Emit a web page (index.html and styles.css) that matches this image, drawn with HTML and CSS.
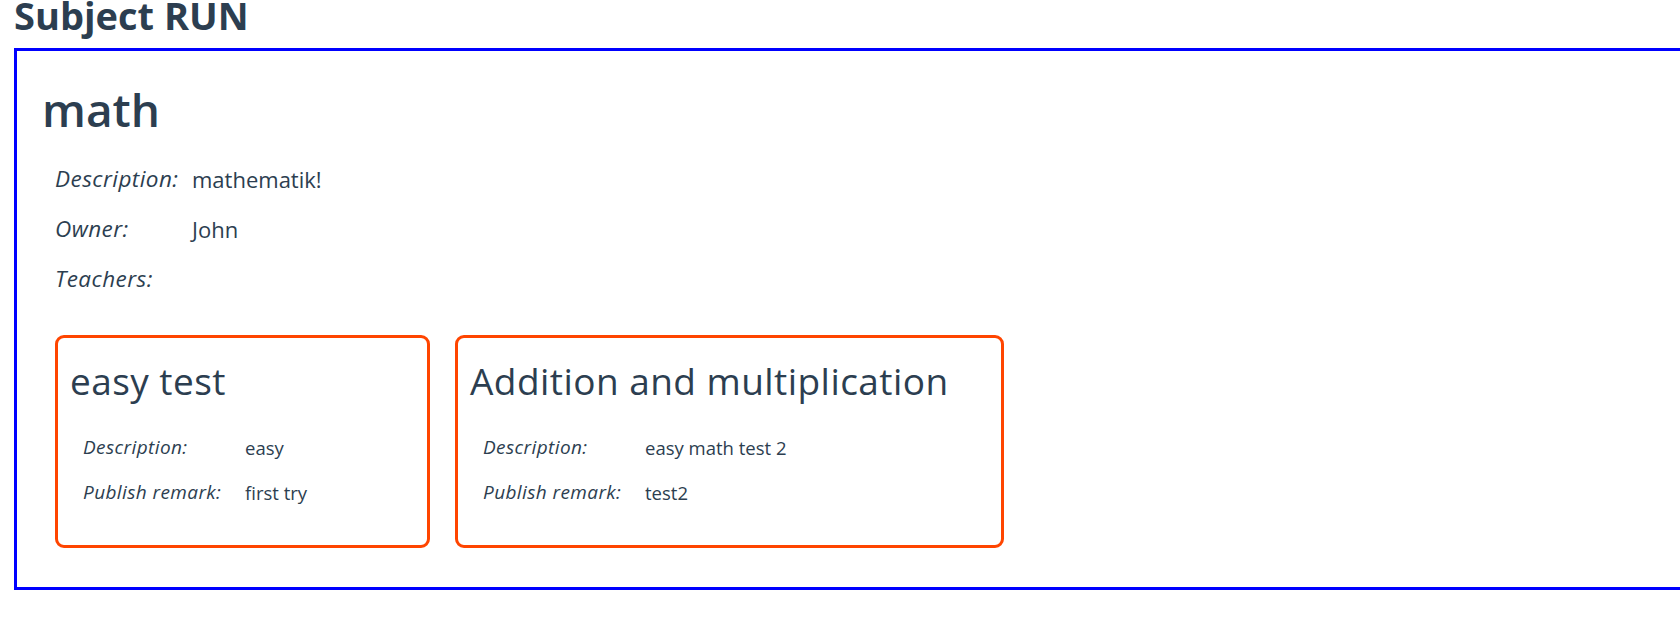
FILE: index.html
```html
<!DOCTYPE html>
<html lang="en">
<head>
<meta charset="utf-8">
<title>Subject RUN</title>
<link rel="stylesheet" href="styles.css">
</head>
<body>
<div class="page">
  <h1 class="page-title">Subject RUN</h1>
  <section class="subject">
    <h2 class="subject-name">math</h2>
    <table class="info">
      <tr><td class="label">Description:</td><td class="value">mathematik!</td></tr>
      <tr><td class="label">Owner:</td><td class="value">John</td></tr>
      <tr><td class="label">Teachers:</td><td class="value"></td></tr>
    </table>
    <div class="tests">
      <div class="card">
        <h3 class="card-title">easy test</h3>
        <table class="card-info">
          <tr><td class="label">Description:</td><td class="value">easy</td></tr>
          <tr><td class="label">Publish remark:</td><td class="value">first try</td></tr>
        </table>
      </div>
      <div class="card">
        <h3 class="card-title">Addition and multiplication</h3>
        <table class="card-info">
          <tr><td class="label">Description:</td><td class="value">easy math test 2</td></tr>
          <tr><td class="label">Publish remark:</td><td class="value">test2</td></tr>
        </table>
      </div>
    </div>
  </section>
</div>
</body>
</html>
```

FILE: styles.css
```css
html, body {
  margin: 0;
  padding: 0;
  background: #ffffff;
}

body {
  font-family: "Open Sans", "Noto Sans", sans-serif;
  color: #2c3e50;
  overflow: hidden;
}

.page {
  padding-left: 14px;
}

.page-title {
  margin: 0 0 17px 0;
  font-size: 38px;
  font-weight: 700;
  line-height: 31px;
  white-space: nowrap;
}

.subject {
  width: 1800px;
  border: 3px solid #0000ff;
  padding: 30px 23px 39px 23px;
}

.subject-name {
  margin: 0 0 17px 2px;
  font-size: 46px;
  font-weight: 600;
  line-height: 56px;
}

.info {
  margin-left: 15px;
  border-collapse: collapse;
  font-size: 22px;
}

.info td {
  padding: 0;
  height: 50px;
  line-height: 50px;
  vertical-align: top;
}

.info .label {
  width: 137px;
  font-style: italic;
  font-size: 22.5px;
  letter-spacing: 0.45px;
}

.tests {
  margin: 31px 0 0 15px;
  display: grid;
  grid-template-columns: 375px 549px;
  column-gap: 25px;
  align-items: start;
}

.card {
  box-sizing: border-box;
  height: 213px;
  border: 3px solid #ff4500;
  border-radius: 9px;
  padding: 21px 12px 0 12px;
}

.card-title {
  margin: 0 0 22px 0;
  font-size: 37px;
  font-weight: 400;
  line-height: 44px;
  letter-spacing: 0.45px;
  white-space: nowrap;
}

.card-info {
  margin-left: 13px;
  border-collapse: collapse;
  font-size: 18.5px;
}

.card-info td {
  padding: 0;
  height: 45px;
  line-height: 45px;
  vertical-align: top;
  white-space: nowrap;
}

.card-info .label {
  width: 162px;
  font-style: italic;
  font-size: 19px;
  letter-spacing: 0.4px;
}
```
